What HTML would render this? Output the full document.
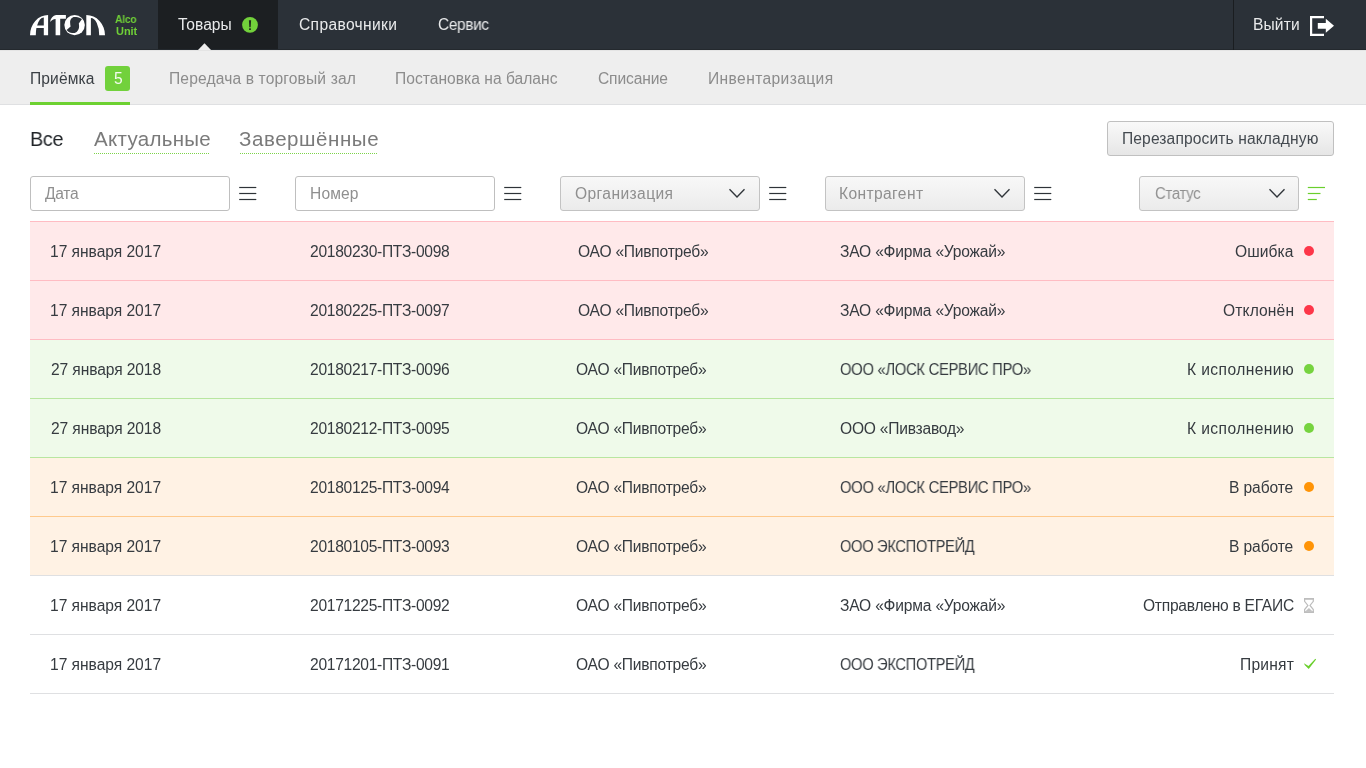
<!DOCTYPE html>
<html lang="ru">
<head>
<meta charset="utf-8">
<title>Приёмка</title>
<style>
html,body{margin:0;padding:0;}
body{width:1366px;height:768px;position:relative;overflow:hidden;background:#ffffff;font-family:"Liberation Sans", sans-serif;}
.a{position:absolute;}
.t{position:absolute;white-space:pre;font-family:"Liberation Sans", sans-serif;}
#nav{left:0;top:0;width:1366px;height:50px;background:#2b3138;}
#navline{left:0;top:49px;width:1366px;height:1px;background:#24292e;}
#act{left:158px;top:0;width:120px;height:50px;background:#1c1f22;}
#sep{left:1233px;top:0;width:1px;height:50px;background:#1a1d20;}
#sub{left:0;top:50px;width:1366px;height:54px;background:#eeeeee;}
#subtop{left:0;top:50px;width:1366px;height:1px;background:#e4e4e4;}
#subline{left:0;top:104px;width:1366px;height:1px;background:#dfe0e2;}
#uline{left:30px;top:102px;width:100px;height:3px;background:#6dd131;}
#badge{left:105px;top:66px;width:25px;height:25px;background:#72d13c;border-radius:3px;}
.dots{height:1px;background-image:linear-gradient(to right,#7dd44a 50%,transparent 50%);background-size:2px 1px;}
.inp{box-sizing:border-box;height:35px;top:176px;width:200px;border:1px solid #bfbfbf;border-radius:3px;background:#fff;}
.sel{box-sizing:border-box;height:35px;top:176px;width:200px;border:1px solid #c3c3c3;border-radius:3px;background:linear-gradient(#f8f8f8,#ebebeb);}
#btn{box-sizing:border-box;left:1107px;top:121px;width:227px;height:35px;border:1px solid #c0c0c0;border-radius:3px;background:linear-gradient(#f9f9f9,#e6e6e6);}
.row{left:30px;width:1304px;height:58px;box-sizing:content-box;}
.r{background:#ffe9ea;border-bottom:1px solid #ffbcc3;}
.g{background:#effaea;border-bottom:1px solid #b8e6a0;}
.o{background:#fff2e4;border-bottom:1px solid #ffca8c;}
.w{background:#ffffff;border-bottom:1px solid #dfe0e2;}
.dot{width:10px;height:10px;border-radius:50%;left:1304px;}
</style>
</head>
<body>
<div class="a" id="nav"></div>
<div class="a" id="act"></div>
<div class="a" id="navline"></div>
<div class="a" id="sep"></div>

<svg class="a" style="left:30px;top:15px" width="76" height="21" viewBox="0 0 76 21">
  <g fill="#ffffff" fill-rule="evenodd">
    <path d="M0,20.2 A18.1,20.2 0 0 1 18.1,0 V20.2 H13.8 V13.1 H6.4 A8,17.8 0 0 0 5.8,20.2 Z M13.8,10.4 V2.4 A8,17.8 0 0 0 7.1,10.4 Z"/>
    <path d="M20,7 C20.8,3.2 23,0.6 26,0.1 H35.9 V3.8 H30.2 V20.2 H25.6 V4 C23.2,4.3 21.2,5.4 20,7 Z"/>
    <ellipse cx="44.6" cy="10.1" rx="10.25" ry="10.05"/>
    <path d="M56.3,20.2 V0 A18.7,20.2 0 0 1 75,20.2 H69.2 A8.3,17.2 0 0 0 60.9,3 V20.2 Z"/>
  </g>
  <path fill="#2b3138" d="M44.4,2.1 C42,2.1 40.1,4.5 40.1,7.2 C40.1,9 40.4,10.5 40.6,11.6 L36.6,15.1 L38.1,16.4 C39.5,17.5 41.5,18 43.7,18 C46.5,18 49.1,15 49.1,11.2 C49.1,10 48.9,9.2 48.8,8.5 L52,4 L50.5,3.3 C49,2.5 46.8,2.1 44.4,2.1 Z"/>
</svg>

<svg class="a" style="left:241px;top:16px" width="18" height="18" viewBox="0 0 18 18">
  <circle cx="9" cy="8.8" r="7.9" fill="#72d13b"/>
  <path d="M7.9,4.3 H10.1 L9.7,11.3 H8.3 Z" fill="#202a1e"/>
  <rect x="8.1" y="12.3" width="1.8" height="1.7" fill="#202a1e"/>
</svg>
<!-- triangle -->
<svg class="a" style="left:197px;top:43px" width="15" height="8" viewBox="0 0 15 8">
  <path d="M0.5,7.5 L7.5,0.3 L14.5,7.5 Z" fill="#eeeeee"/>
</svg>

<!-- logout icon -->
<svg class="a" style="left:1309px;top:15px" width="26" height="22" viewBox="0 0 26 22">
  <path d="M1,1 H15 V3.2 H3.2 V18.8 H15 V21 H1 Z" fill="#ffffff"/>
  <path d="M8.8,8 H16.8 V3.8 L25,10.8 L16.8,17.8 V13.8 H8.8 Z" fill="#ffffff"/>
</svg>

<div class="a" id="sub"></div>
<div class="a" id="subtop"></div>
<div class="a" id="subline"></div>
<div class="a" id="uline"></div>
<div class="a" id="badge"></div>

<div class="a dots" style="left:94px;top:153px;width:116px;"></div>
<div class="a dots" style="left:240px;top:153px;width:138px;"></div>

<div class="a" id="btn"></div>

<div class="a inp" style="left:30px;"></div>
<div class="a inp" style="left:295px;"></div>
<div class="a sel" style="left:560px;"></div>
<div class="a sel" style="left:825px;"></div>
<div class="a sel" style="left:1139px;width:160px;"></div>

<!-- hamburgers -->
<svg class="a" style="left:238px;top:184px" width="20" height="20" viewBox="0 0 20 20"><g stroke="#2e3338" stroke-width="1.2"><line x1="1.2" y1="3.5" x2="18.3" y2="3.5"/><line x1="1.2" y1="9.5" x2="18.3" y2="9.5"/><line x1="1.2" y1="15.5" x2="18.3" y2="15.5"/></g></svg>
<svg class="a" style="left:503px;top:184px" width="20" height="20" viewBox="0 0 20 20"><g stroke="#2e3338" stroke-width="1.2"><line x1="1.2" y1="3.5" x2="18.3" y2="3.5"/><line x1="1.2" y1="9.5" x2="18.3" y2="9.5"/><line x1="1.2" y1="15.5" x2="18.3" y2="15.5"/></g></svg>
<svg class="a" style="left:768px;top:184px" width="20" height="20" viewBox="0 0 20 20"><g stroke="#2e3338" stroke-width="1.2"><line x1="1.2" y1="3.5" x2="18.3" y2="3.5"/><line x1="1.2" y1="9.5" x2="18.3" y2="9.5"/><line x1="1.2" y1="15.5" x2="18.3" y2="15.5"/></g></svg>
<svg class="a" style="left:1033px;top:184px" width="20" height="20" viewBox="0 0 20 20"><g stroke="#2e3338" stroke-width="1.2"><line x1="1.2" y1="3.5" x2="18.3" y2="3.5"/><line x1="1.2" y1="9.5" x2="18.3" y2="9.5"/><line x1="1.2" y1="15.5" x2="18.3" y2="15.5"/></g></svg>
<svg class="a" style="left:1307px;top:184px" width="20" height="20" viewBox="0 0 20 20"><g stroke="#6acf2d" stroke-width="1.2"><line x1="0.8" y1="3.5" x2="18" y2="3.5"/><line x1="0.8" y1="9.5" x2="13.5" y2="9.5"/><line x1="0.8" y1="15.5" x2="9.8" y2="15.5"/></g></svg>

<!-- chevrons -->
<svg class="a" style="left:728px;top:187px" width="18" height="13" viewBox="0 0 18 13"><path d="M1.5,2.2 L9,10 L16.5,2.2" fill="none" stroke="#30353a" stroke-width="1.35"/></svg>
<svg class="a" style="left:993px;top:187px" width="18" height="13" viewBox="0 0 18 13"><path d="M1.5,2.2 L9,10 L16.5,2.2" fill="none" stroke="#30353a" stroke-width="1.35"/></svg>
<svg class="a" style="left:1268px;top:187px" width="18" height="13" viewBox="0 0 18 13"><path d="M1.5,2.2 L9,10 L16.5,2.2" fill="none" stroke="#30353a" stroke-width="1.35"/></svg>

<!-- table -->
<div class="a" style="left:30px;top:221px;width:1304px;height:1px;background:#ffbcc3;"></div>
<div class="a row r" style="top:222px;"></div>
<div class="a row r" style="top:281px;"></div>
<div class="a row g" style="top:340px;"></div>
<div class="a row g" style="top:399px;"></div>
<div class="a row o" style="top:458px;"></div>
<div class="a row o" style="top:517px;border-bottom-color:#dfe0e2;"></div>
<div class="a row w" style="top:576px;"></div>
<div class="a row w" style="top:635px;"></div>

<div class="a dot" style="top:245.8px;background:#fd3649;"></div>
<div class="a dot" style="top:304.8px;background:#fd3649;"></div>
<div class="a dot" style="top:363.8px;background:#76d33f;"></div>
<div class="a dot" style="top:422.8px;background:#76d33f;"></div>
<div class="a dot" style="top:481.8px;background:#ff9406;"></div>
<div class="a dot" style="top:540.8px;background:#ff9406;"></div>

<!-- hourglass -->
<svg class="a" style="left:1303px;top:597px" width="12" height="17" viewBox="0 0 12 17">
  <path d="M1.6,1.6 H10.3 V4.4 L7,8.46 L10.3,12.5 V15.3 H1.6 V12.5 L4.9,8.46 L1.6,4.4 Z" fill="none" stroke="#bdbdbd" stroke-width="1.2"/>
  <rect x="1" y="1" width="9.9" height="1.7" fill="#bdbdbd"/>
  <rect x="1" y="14.2" width="9.9" height="1.7" fill="#bdbdbd"/>
  <path d="M2.2,14.4 L5.95,11 L9.7,14.4 Z" fill="#c2c2c2"/>
</svg>
<!-- check -->
<svg class="a" style="left:1302px;top:657px" width="16" height="14" viewBox="0 0 16 14">
  <path d="M1.9,6.2 L6.5,9 L13.3,1.8 L14.1,2.6 L6.7,12 L2.9,8.3 Z" fill="#6acf2d"/>
</svg>

<span class=t style="left:178.00px;top:14.00px;font-size:15.6px;line-height:22px;letter-spacing:0.020px;color:#e9eaeb;font-weight:400;will-change:transform">Товары</span>
<span class=t style="left:298.50px;top:14.00px;font-size:15.6px;line-height:22px;letter-spacing:0.350px;color:#e9eaeb;font-weight:400;will-change:transform">Справочники</span>
<span class=t style="left:437.60px;top:14.00px;font-size:15.6px;line-height:22px;letter-spacing:-0.300px;color:#e9eaeb;font-weight:400;transform:scaleX(0.9845);transform-origin:0 0;will-change:transform">Сервис</span>
<span class=t style="left:1252.50px;top:14.00px;font-size:15.6px;line-height:22px;letter-spacing:0.125px;color:#e9eaeb;font-weight:400;will-change:transform">Выйти</span>
<span class=t style="left:115.00px;top:12.00px;font-size:11px;line-height:15px;letter-spacing:-0.300px;color:#6fcf37;font-weight:700;transform:scaleX(0.9394);transform-origin:0 0;will-change:transform">Alco</span>
<span class=t style="left:115.90px;top:24.00px;font-size:11px;line-height:15px;letter-spacing:-0.033px;color:#6fcf37;font-weight:700;will-change:transform">Unit</span>
<span class=t style="left:29.60px;top:68.00px;font-size:15.6px;line-height:22px;letter-spacing:0.100px;color:#3a3f44;font-weight:400;will-change:transform">Приёмка</span>
<span class=t style="left:169.00px;top:68.00px;font-size:15.6px;line-height:22px;letter-spacing:0.136px;color:#8c8c8c;font-weight:400;will-change:transform">Передача в торговый зал</span>
<span class=t style="left:395.30px;top:68.00px;font-size:15.6px;line-height:22px;letter-spacing:0.021px;color:#8c8c8c;font-weight:400;will-change:transform">Постановка на баланс</span>
<span class=t style="left:598.00px;top:68.00px;font-size:15.6px;line-height:22px;letter-spacing:-0.143px;color:#8c8c8c;font-weight:400;will-change:transform">Списание</span>
<span class=t style="left:708.00px;top:68.00px;font-size:15.6px;line-height:22px;letter-spacing:0.385px;color:#8c8c8c;font-weight:400;will-change:transform">Инвентаризация</span>
<span class=t style="left:113.90px;top:68.00px;font-size:15.6px;line-height:22px;letter-spacing:0.000px;color:rgba(255,255,255,0.92);font-weight:400;will-change:transform">5</span>
<span class=t style="left:29.73px;top:124.00px;font-size:20.5px;line-height:29px;letter-spacing:-0.300px;color:#1f2327;font-weight:400;transform:scaleX(0.9671);transform-origin:0 0;will-change:transform">Все</span>
<span class=t style="left:93.70px;top:124.00px;font-size:20.5px;line-height:29px;letter-spacing:0.300px;color:#7a7a7a;font-weight:400;will-change:transform">Актуальные</span>
<span class=t style="left:239.00px;top:124.00px;font-size:20.5px;line-height:29px;letter-spacing:0.570px;color:#7a7a7a;font-weight:400;will-change:transform">Завершённые</span>
<span class=t style="left:1122.00px;top:128.00px;font-size:15.6px;line-height:22px;letter-spacing:0.114px;color:#444a50;font-weight:400;will-change:transform">Перезапросить накладную</span>
<span class=t style="left:44.80px;top:183.00px;font-size:15.6px;line-height:22px;letter-spacing:-0.300px;color:#8f8f8f;font-weight:400;transform:scaleX(0.9883);transform-origin:0 0;will-change:transform">Дата</span>
<span class=t style="left:309.70px;top:183.00px;font-size:15.6px;line-height:22px;letter-spacing:0.125px;color:#8f8f8f;font-weight:400;will-change:transform">Номер</span>
<span class=t style="left:575.00px;top:183.00px;font-size:15.6px;line-height:22px;letter-spacing:0.400px;color:#8f8f8f;font-weight:400;will-change:transform">Организация</span>
<span class=t style="left:839.00px;top:183.00px;font-size:15.6px;line-height:22px;letter-spacing:0.378px;color:#8f8f8f;font-weight:400;will-change:transform">Контрагент</span>
<span class=t style="left:1154.70px;top:183.00px;font-size:15.6px;line-height:22px;letter-spacing:-0.300px;color:#8f8f8f;font-weight:400;transform:scaleX(0.9537);transform-origin:0 0;will-change:transform">Статус</span>
<span class=t style="left:50.20px;top:241.00px;font-size:15.6px;line-height:22px;letter-spacing:-0.031px;color:#363b40;font-weight:400;will-change:transform">17 января 2017</span>
<span class=t style="left:310.40px;top:241.00px;font-size:15.6px;line-height:22px;letter-spacing:-0.294px;color:#363b40;font-weight:400;will-change:transform">20180230-ПТЗ-0098</span>
<span class=t style="left:577.70px;top:241.00px;font-size:15.6px;line-height:22px;letter-spacing:-0.229px;color:#363b40;font-weight:400;will-change:transform">ОАО «Пивпотреб»</span>
<span class=t style="left:840.30px;top:241.00px;font-size:15.6px;line-height:22px;letter-spacing:-0.200px;color:#363b40;font-weight:400;will-change:transform">ЗАО «Фирма «Урожай»</span>
<span class=t style="left:1235.40px;top:241.00px;font-size:15.6px;line-height:22px;letter-spacing:0.040px;color:#363b40;font-weight:400;will-change:transform">Ошибка</span>
<span class=t style="left:50.20px;top:300.00px;font-size:15.6px;line-height:22px;letter-spacing:-0.031px;color:#363b40;font-weight:400;will-change:transform">17 января 2017</span>
<span class=t style="left:310.40px;top:300.00px;font-size:15.6px;line-height:22px;letter-spacing:-0.294px;color:#363b40;font-weight:400;will-change:transform">20180225-ПТЗ-0097</span>
<span class=t style="left:577.70px;top:300.00px;font-size:15.6px;line-height:22px;letter-spacing:-0.229px;color:#363b40;font-weight:400;will-change:transform">ОАО «Пивпотреб»</span>
<span class=t style="left:840.30px;top:300.00px;font-size:15.6px;line-height:22px;letter-spacing:-0.200px;color:#363b40;font-weight:400;will-change:transform">ЗАО «Фирма «Урожай»</span>
<span class=t style="left:1222.70px;top:300.00px;font-size:15.6px;line-height:22px;letter-spacing:0.129px;color:#363b40;font-weight:400;will-change:transform">Отклонён</span>
<span class=t style="left:51.20px;top:359.00px;font-size:15.6px;line-height:22px;letter-spacing:-0.108px;color:#363b40;font-weight:400;will-change:transform">27 января 2018</span>
<span class=t style="left:310.40px;top:359.00px;font-size:15.6px;line-height:22px;letter-spacing:-0.294px;color:#363b40;font-weight:400;will-change:transform">20180217-ПТЗ-0096</span>
<span class=t style="left:576.40px;top:359.00px;font-size:15.6px;line-height:22px;letter-spacing:-0.229px;color:#363b40;font-weight:400;will-change:transform">ОАО «Пивпотреб»</span>
<span class=t style="left:840.30px;top:359.00px;font-size:15.6px;line-height:22px;letter-spacing:-0.300px;color:#363b40;font-weight:400;transform:scaleX(0.9478);transform-origin:0 0;will-change:transform">ООО «ЛОСК СЕРВИС ПРО»</span>
<span class=t style="left:1187.10px;top:359.00px;font-size:15.6px;line-height:22px;letter-spacing:0.409px;color:#363b40;font-weight:400;will-change:transform">К исполнению</span>
<span class=t style="left:51.20px;top:418.00px;font-size:15.6px;line-height:22px;letter-spacing:-0.108px;color:#363b40;font-weight:400;will-change:transform">27 января 2018</span>
<span class=t style="left:310.40px;top:418.00px;font-size:15.6px;line-height:22px;letter-spacing:-0.294px;color:#363b40;font-weight:400;will-change:transform">20180212-ПТЗ-0095</span>
<span class=t style="left:576.40px;top:418.00px;font-size:15.6px;line-height:22px;letter-spacing:-0.229px;color:#363b40;font-weight:400;will-change:transform">ОАО «Пивпотреб»</span>
<span class=t style="left:840.30px;top:418.00px;font-size:15.6px;line-height:22px;letter-spacing:-0.231px;color:#363b40;font-weight:400;will-change:transform">ООО «Пивзавод»</span>
<span class=t style="left:1187.10px;top:418.00px;font-size:15.6px;line-height:22px;letter-spacing:0.409px;color:#363b40;font-weight:400;will-change:transform">К исполнению</span>
<span class=t style="left:50.20px;top:477.00px;font-size:15.6px;line-height:22px;letter-spacing:-0.031px;color:#363b40;font-weight:400;will-change:transform">17 января 2017</span>
<span class=t style="left:310.40px;top:477.00px;font-size:15.6px;line-height:22px;letter-spacing:-0.294px;color:#363b40;font-weight:400;will-change:transform">20180125-ПТЗ-0094</span>
<span class=t style="left:576.40px;top:477.00px;font-size:15.6px;line-height:22px;letter-spacing:-0.229px;color:#363b40;font-weight:400;will-change:transform">ОАО «Пивпотреб»</span>
<span class=t style="left:840.30px;top:477.00px;font-size:15.6px;line-height:22px;letter-spacing:-0.300px;color:#363b40;font-weight:400;transform:scaleX(0.9478);transform-origin:0 0;will-change:transform">ООО «ЛОСК СЕРВИС ПРО»</span>
<span class=t style="left:1229.30px;top:477.00px;font-size:15.6px;line-height:22px;letter-spacing:-0.100px;color:#363b40;font-weight:400;will-change:transform">В работе</span>
<span class=t style="left:50.20px;top:536.00px;font-size:15.6px;line-height:22px;letter-spacing:-0.031px;color:#363b40;font-weight:400;will-change:transform">17 января 2017</span>
<span class=t style="left:310.40px;top:536.00px;font-size:15.6px;line-height:22px;letter-spacing:-0.294px;color:#363b40;font-weight:400;will-change:transform">20180105-ПТЗ-0093</span>
<span class=t style="left:576.40px;top:536.00px;font-size:15.6px;line-height:22px;letter-spacing:-0.229px;color:#363b40;font-weight:400;will-change:transform">ОАО «Пивпотреб»</span>
<span class=t style="left:840.30px;top:536.00px;font-size:15.6px;line-height:22px;letter-spacing:-0.300px;color:#363b40;font-weight:400;transform:scaleX(0.9382);transform-origin:0 0;will-change:transform">ООО ЭКСПОТРЕЙД</span>
<span class=t style="left:1229.30px;top:536.00px;font-size:15.6px;line-height:22px;letter-spacing:-0.100px;color:#363b40;font-weight:400;will-change:transform">В работе</span>
<span class=t style="left:50.20px;top:595.00px;font-size:15.6px;line-height:22px;letter-spacing:-0.031px;color:#363b40;font-weight:400;will-change:transform">17 января 2017</span>
<span class=t style="left:310.40px;top:595.00px;font-size:15.6px;line-height:22px;letter-spacing:-0.294px;color:#363b40;font-weight:400;will-change:transform">20171225-ПТЗ-0092</span>
<span class=t style="left:576.40px;top:595.00px;font-size:15.6px;line-height:22px;letter-spacing:-0.229px;color:#363b40;font-weight:400;will-change:transform">ОАО «Пивпотреб»</span>
<span class=t style="left:840.30px;top:595.00px;font-size:15.6px;line-height:22px;letter-spacing:-0.200px;color:#363b40;font-weight:400;will-change:transform">ЗАО «Фирма «Урожай»</span>
<span class=t style="left:1143.10px;top:595.00px;font-size:15.6px;line-height:22px;letter-spacing:-0.265px;color:#363b40;font-weight:400;will-change:transform">Отправлено в ЕГАИС</span>
<span class=t style="left:50.20px;top:654.00px;font-size:15.6px;line-height:22px;letter-spacing:-0.031px;color:#363b40;font-weight:400;will-change:transform">17 января 2017</span>
<span class=t style="left:310.40px;top:654.00px;font-size:15.6px;line-height:22px;letter-spacing:-0.294px;color:#363b40;font-weight:400;will-change:transform">20171201-ПТЗ-0091</span>
<span class=t style="left:576.40px;top:654.00px;font-size:15.6px;line-height:22px;letter-spacing:-0.229px;color:#363b40;font-weight:400;will-change:transform">ОАО «Пивпотреб»</span>
<span class=t style="left:840.30px;top:654.00px;font-size:15.6px;line-height:22px;letter-spacing:-0.300px;color:#363b40;font-weight:400;transform:scaleX(0.9382);transform-origin:0 0;will-change:transform">ООО ЭКСПОТРЕЙД</span>
<span class=t style="left:1239.50px;top:654.00px;font-size:15.6px;line-height:22px;letter-spacing:0.220px;color:#363b40;font-weight:400;will-change:transform">Принят</span>
</body>
</html>
